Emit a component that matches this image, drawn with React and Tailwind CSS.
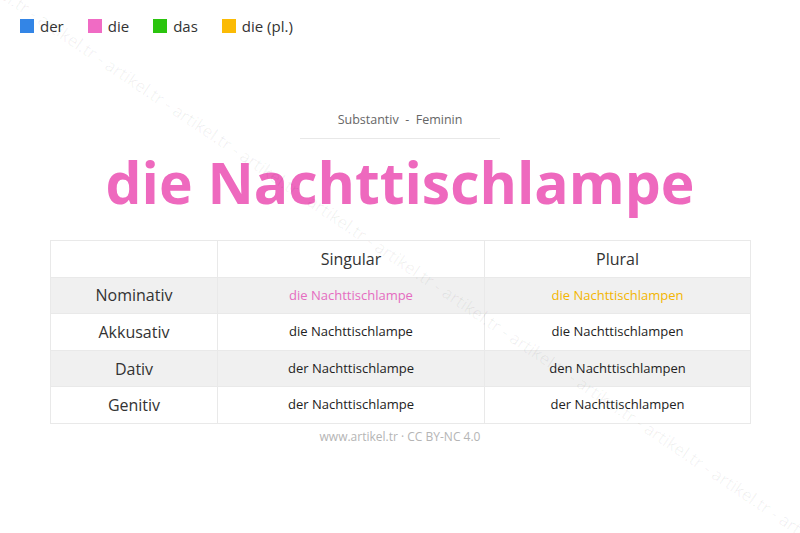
import React from 'react';

const legend = [
  { label: 'der', color: 'bg-[#3385e6]' },
  { label: 'die', color: 'bg-[#f06bc4]' },
  { label: 'das', color: 'bg-[#2bc40e]' },
  { label: 'die (pl.)', color: 'bg-[#fbbb05]' },
];

const rows = [
  { kasus: 'Nominativ', sg: 'die Nachttischlampe', pl: 'die Nachttischlampen', shaded: true, colored: true },
  { kasus: 'Akkusativ', sg: 'die Nachttischlampe', pl: 'die Nachttischlampen' },
  { kasus: 'Dativ', sg: 'der Nachttischlampe', pl: 'den Nachttischlampen', shaded: true },
  { kasus: 'Genitiv', sg: 'der Nachttischlampe', pl: 'der Nachttischlampen' },
];

const watermark = Array(14).fill('artikel.tr - ').join('');

export default function App() {
  return (
    <div className="relative w-[800px] h-[533px] overflow-hidden bg-white font-['Open_Sans',sans-serif] text-[#333]">
      {/* Legend */}
      <div className="flex items-center gap-[24px] px-5 pt-[17px]">
        {legend.map((item) => (
          <div key={item.label} className="flex items-center gap-[6px]">
            <span className={`w-[14px] h-[14px] ${item.color}`} />
            <span className="text-[15px] leading-[18px]">{item.label}</span>
          </div>
        ))}
      </div>

      {/* Word type */}
      <div className="mt-[76px] mx-auto w-[200px] border-b border-[#e8e8e8] pb-[9px] text-center text-[12.5px] leading-[18px] text-[#666]">
        Substantiv&nbsp; - &nbsp;Feminin
      </div>

      <h1 className="mt-[15px] text-center text-[57px] leading-none font-bold text-[#ee69be]">
        die Nachttischlampe
      </h1>

      {/* Declension table */}
      <table className="mt-[29px] mx-[50px] w-[700px] border-collapse table-fixed">
        <colgroup>
          <col className="w-[167px]" />
          <col className="w-[267px]" />
          <col className="w-[266px]" />
        </colgroup>
        <thead>
          <tr className="h-[36.6px]">
            <th className="border border-[#e9e9e9]" />
            <th className="border border-[#e9e9e9] text-[16px] font-normal text-[#333]">Singular</th>
            <th className="border border-[#e9e9e9] text-[16px] font-normal text-[#333]">Plural</th>
          </tr>
        </thead>
        <tbody>
          {rows.map((r) => (
            <tr key={r.kasus} className={`h-[36.6px] ${r.shaded ? 'bg-[#f0f0f0]' : 'bg-white'}`}>
              <td className="border border-[#e9e9e9] text-center text-[16px] text-[#333]">{r.kasus}</td>
              <td className={`border border-[#e9e9e9] text-center text-[13px] ${r.colored ? 'text-[#e56cc0]' : 'text-[#222]'}`}>
                {r.sg}
              </td>
              <td className={`border border-[#e9e9e9] text-center text-[13px] ${r.colored ? 'text-[#f3b500]' : 'text-[#222]'}`}>
                {r.pl}
              </td>
            </tr>
          ))}
        </tbody>
      </table>

      <p className="mt-[5px] text-center text-[12px] leading-4 text-[#b5b5b5]">www.artikel.tr · CC BY-NC 4.0</p>

      {/* Watermark */}
      <div className="pointer-events-none absolute left-[-22px] top-[-36px] origin-top-left rotate-[34deg] whitespace-nowrap text-[17px] leading-5 text-black/[0.06]">
        {watermark}
      </div>
    </div>
  );
}
